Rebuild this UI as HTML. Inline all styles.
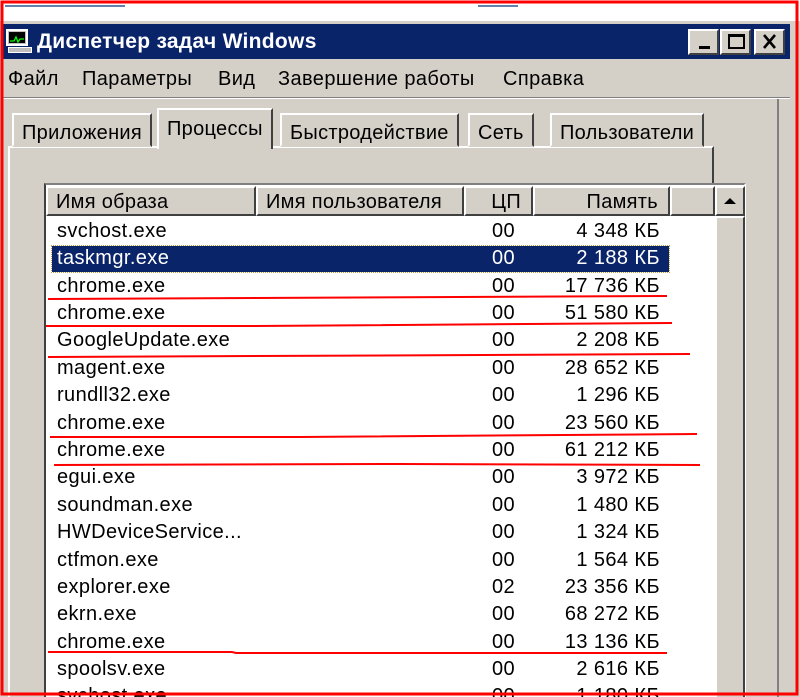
<!DOCTYPE html>
<html style="width:800px;height:697px;overflow:hidden"><head><meta charset="utf-8"><style>
*{margin:0;padding:0;box-sizing:border-box}
body{width:800px;height:697px;overflow:hidden;background:#d4d0c8;font-family:"Liberation Sans","DejaVu Sans",sans-serif;position:relative;color:#000}
.abs{position:absolute}
.t{font-size:20px;letter-spacing:0.4px;white-space:nowrap}
.btn{position:absolute;top:29px;width:31px;height:26px;background:#d4d0c8;border:2px solid;border-color:#fff #404040 #404040 #fff}
.tab{position:absolute;top:113px;height:34px;border:2px solid;border-color:#fff #404040 transparent #fff;background:#d4d0c8;font-size:20px;padding:7px 8px 0;letter-spacing:0.3px}
.row{position:absolute;left:48px;width:622px;height:27px;font-size:20px;letter-spacing:0.4px}
.row span{position:absolute;top:2px}
.n{left:9px}.c{left:444px}.m{right:10px}
.hd{position:absolute;top:186px;height:30px;border:2px solid;border-color:#fff #404040 #404040 #fff;background:#d4d0c8;font-size:20px;padding:3px 8px;letter-spacing:0.3px;white-space:nowrap}
</style></head><body>
<div class="abs" style="left:0;top:0;width:800px;height:21px;background:#fff"></div>
<div class="abs" style="left:5px;top:5px;width:120px;height:2px;background:#6080b0"></div>
<div class="abs" style="left:478px;top:5px;width:40px;height:2px;background:#6080b0"></div>
<div class="abs" style="left:3px;top:24px;width:787px;height:35px;background:#0a246a"></div>
<div class="abs" style="left:6px;top:29px;width:22px;height:17px;background:#c0c0c0;border:2px solid #fff"><div style="margin:1px;height:11px;background:#000"><svg width="16" height="11"><polyline points="1,7 5,7 7,3 9,8 11,5 15,5" fill="none" stroke="#0f0" stroke-width="1.3"/></svg></div></div>
<div class="abs" style="left:8px;top:47px;width:24px;height:6px;background:#c0c0c0;border:1px solid #fff"></div>
<div class="abs t" style="left:37px;top:30px;color:#fff;font-weight:bold;font-size:21px;letter-spacing:0.3px">Диспетчер задач Windows</div>
<div class="btn" style="left:688px"><div style="position:absolute;left:9px;top:15px;width:11px;height:3px;background:#000"></div></div>
<div class="btn" style="left:720px"><div style="position:absolute;left:6px;top:3px;width:17px;height:15px;border:2px solid #000;border-top-width:3px"></div></div>
<div class="btn" style="left:754px"><svg width="27" height="22" style="position:absolute;left:0;top:0"><path d="M8 4 L19 17 M19 4 L8 17" stroke="#000" stroke-width="2.6"/></svg></div>
<div class="abs t" style="left:8px;top:68px">Файл</div>
<div class="abs t" style="left:82px;top:68px">Параметры</div>
<div class="abs t" style="left:218px;top:68px">Вид</div>
<div class="abs t" style="left:278px;top:68px">Завершение работы</div>
<div class="abs t" style="left:503px;top:68px">Справка</div>
<div class="abs" style="left:3px;top:97px;width:787px;height:1px;background:#808080"></div>
<div class="abs" style="left:3px;top:98px;width:787px;height:1px;background:#fff"></div>
<div class="abs" style="left:8px;top:146px;width:706px;height:551px;border:2px solid;border-bottom:none;border-color:#fff #404040 #404040 #fff"></div>
<div class="tab" style="left:12px">Приложения</div>
<div class="tab" style="left:280px">Быстродействие</div>
<div class="tab" style="left:468px">Сеть</div>
<div class="tab" style="left:550px">Пользователи</div>
<div class="tab" style="left:157px;top:108px;height:41px;padding-top:8px;border-bottom:none">Процессы</div>
<div class="abs" style="left:777px;top:99px;width:2px;height:598px;background:#808080"></div>
<div class="abs" style="left:44px;top:183px;width:702px;height:514px;background:#fff;border:2px solid;border-bottom:none;border-color:#808080 #fff #fff #404040"></div>
<div class="hd" style="left:46px;width:210px">Имя образа</div>
<div class="hd" style="left:256px;width:208px">Имя пользователя</div>
<div class="hd" style="left:464px;width:69px;text-align:right;padding-right:10px">ЦП</div>
<div class="hd" style="left:533px;width:137px;text-align:right;padding-right:10px">Память</div>
<div class="hd" style="left:670px;width:45px"></div>
<div class="btn" style="left:715px;top:186px;width:30px;height:30px"><svg width="26" height="26" style="position:absolute"><path d="M7 16 L19 16 L13 10Z" fill="#000"/></svg></div>
<div class="abs" style="left:715px;top:216px;width:30px;height:481px;background:#d4d0c8;border:2px solid;border-bottom:none;border-color:#fff #404040 #404040 #fff"></div>
<div class="abs" style="left:52px;top:246px;width:617px;height:26px;background:#0a246a;outline:1px dotted #c0a040"></div>
<div class="row" style="top:218px"><span class="n">svchost.exe</span><span class="c">00</span><span class="m">4 348 КБ</span></div>
<div class="row" style="top:245px;color:#fff"><span class="n">taskmgr.exe</span><span class="c">00</span><span class="m">2 188 КБ</span></div>
<div class="row" style="top:273px"><span class="n">chrome.exe</span><span class="c">00</span><span class="m">17 736 КБ</span></div>
<div class="row" style="top:300px"><span class="n">chrome.exe</span><span class="c">00</span><span class="m">51 580 КБ</span></div>
<div class="row" style="top:327px"><span class="n">GoogleUpdate.exe</span><span class="c">00</span><span class="m">2 208 КБ</span></div>
<div class="row" style="top:355px"><span class="n">magent.exe</span><span class="c">00</span><span class="m">28 652 КБ</span></div>
<div class="row" style="top:382px"><span class="n">rundll32.exe</span><span class="c">00</span><span class="m">1 296 КБ</span></div>
<div class="row" style="top:410px"><span class="n">chrome.exe</span><span class="c">00</span><span class="m">23 560 КБ</span></div>
<div class="row" style="top:437px"><span class="n">chrome.exe</span><span class="c">00</span><span class="m">61 212 КБ</span></div>
<div class="row" style="top:464px"><span class="n">egui.exe</span><span class="c">00</span><span class="m">3 972 КБ</span></div>
<div class="row" style="top:492px"><span class="n">soundman.exe</span><span class="c">00</span><span class="m">1 480 КБ</span></div>
<div class="row" style="top:519px"><span class="n">HWDeviceService...</span><span class="c">00</span><span class="m">1 324 КБ</span></div>
<div class="row" style="top:547px"><span class="n">ctfmon.exe</span><span class="c">00</span><span class="m">1 564 КБ</span></div>
<div class="row" style="top:574px"><span class="n">explorer.exe</span><span class="c">02</span><span class="m">23 356 КБ</span></div>
<div class="row" style="top:601px"><span class="n">ekrn.exe</span><span class="c">00</span><span class="m">68 272 КБ</span></div>
<div class="row" style="top:629px"><span class="n">chrome.exe</span><span class="c">00</span><span class="m">13 136 КБ</span></div>
<div class="row" style="top:656px"><span class="n">spoolsv.exe</span><span class="c">00</span><span class="m">2 616 КБ</span></div>
<div class="row" style="top:683px;height:14px;overflow:hidden"><span class="n">svchost.exe</span><span class="c">00</span><span class="m">1 180 КБ</span></div>
<svg class="abs" style="left:0;top:0" width="800" height="697">
<g stroke="#f00" stroke-width="2" fill="none">
<polyline points="48,299 255,298 667,296"/>
<polyline points="46,326 255,326 672,323"/>
<polyline points="48,357 690,354"/>
<polyline points="50,437 300,437 697,434"/>
<polyline points="54,465 400,464 700,465"/>
<polyline points="48,652 232,652 236,653 667,653"/>
</g>
<rect x="2" y="2" width="795" height="692" stroke="#f00" stroke-width="3" fill="none"/>
</svg>
</body></html>
